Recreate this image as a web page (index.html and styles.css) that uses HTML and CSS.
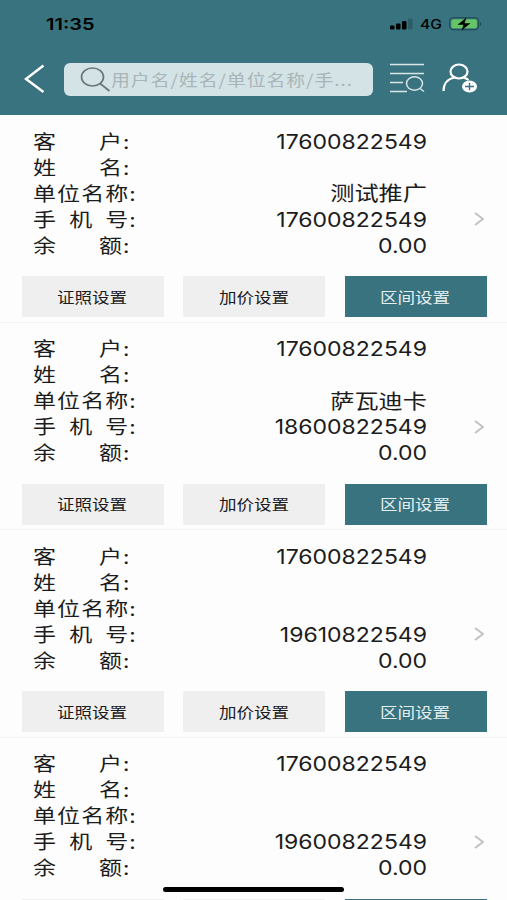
FILE: index.html
```html
<!DOCTYPE html>
<html lang="zh-CN">
<head>
  <meta charset="UTF-8">
  <meta name="viewport" content="width=device-width, initial-scale=1.0">
  <title>客户列表</title>
  <link rel="stylesheet" href="styles.css">
</head>
<body>

  <header class="header">
    <div class="status-bar">
      <span class="time">11:35</span>
      <div class="status-icons">
        <svg class="signal" width="23" height="12" viewBox="0 0 23 12">
          <rect x="0" y="7.5" width="4.5" height="4" rx="1"/>
          <rect x="6" y="5.5" width="4.5" height="6" rx="1"/>
          <rect x="12" y="3" width="4.5" height="8.5" rx="1"/>
          <rect x="18" y="0.5" width="4.5" height="11" rx="1" opacity="0.2"/>
        </svg>
        <span class="network">4G</span>
        <svg class="battery" width="33" height="14" viewBox="0 0 33 14">
          <rect x="0.6" y="0.8" width="29" height="12" rx="3.5" fill="none" stroke="#1d454d" stroke-width="1"/>
          <rect x="2.3" y="2.3" width="25.6" height="9" rx="2" fill="#65c466"/>
          <path d="M31 5v4c1.6-.6 1.6-3.4 0-4z" fill="#1d454d"/>
          <path d="M17.5.5 8.500 7.700h6l-2 5.800 9-7.200h-6z" fill="#000"/>
        </svg>
      </div>
    </div>

    <div class="nav-bar">
      <svg class="back" width="21" height="30" viewBox="0 0 21 30">
        <path d="M19.500 1.500 2 15l17.500 13"/>
      </svg>
      <div class="search-box">
        <svg class="search-icon" width="31" height="26" viewBox="0 0 31 26">
          <ellipse cx="12.500" cy="11" rx="11" ry="9"/>
          <path d="M20 17.500 29.500 25"/>
        </svg>
        <span class="placeholder">用户名/姓名/单位名称/手...</span>
      </div>
      <svg class="filter" width="36" height="30" viewBox="0 0 36 30">
        <path d="M1 1.500h34M1 10.500h34M1 19.500h13M1 28.500h17"/>
        <ellipse cx="25.500" cy="20.500" rx="8" ry="6.700"/>
        <path d="m31 25.500 4 3"/>
      </svg>
      <svg class="add-user" width="36" height="30" viewBox="0 0 36 30">
        <ellipse cx="17" cy="8.500" rx="8.500" ry="7"/>
        <path d="M1.500 28C1.500 20.500 6 15.800 12.500 14.500M21.500 14.500c2 .5 3.500 1.300 5 2.500"/>
        <ellipse class="badge" cx="27.500" cy="23.500" rx="7.500" ry="6"/>
        <path class="plus" d="M23 23.500h9M27.500 19.700v7.600"/>
      </svg>
    </div>
  </header>

  <main class="list">
    <section class="card">
      <div class="info">
        <div class="row"><span class="label two">客 户:</span><span class="value">17600822549</span></div>
        <div class="row"><span class="label two">姓 名:</span><span class="value"></span></div>
        <div class="row"><span class="label">单位名称:</span><span class="value cn">测试推广</span></div>
        <div class="row"><span class="label three">手 机 号:</span><span class="value">17600822549</span>
          <svg class="arrow" width="10" height="14" viewBox="0 0 10 14"><path d="m1 1 8 6-8 6"/></svg>
        </div>
        <div class="row"><span class="label two">余 额:</span><span class="value">0.00</span></div>
      </div>
      <div class="actions">
        <button class="btn"><span>证照设置</span></button>
        <button class="btn"><span>加价设置</span></button>
        <button class="btn primary"><span>区间设置</span></button>
      </div>
    </section>

    <section class="card">
      <div class="info">
        <div class="row"><span class="label two">客 户:</span><span class="value">17600822549</span></div>
        <div class="row"><span class="label two">姓 名:</span><span class="value"></span></div>
        <div class="row"><span class="label">单位名称:</span><span class="value cn">萨瓦迪卡</span></div>
        <div class="row"><span class="label three">手 机 号:</span><span class="value">18600822549</span>
          <svg class="arrow" width="10" height="14" viewBox="0 0 10 14"><path d="m1 1 8 6-8 6"/></svg>
        </div>
        <div class="row"><span class="label two">余 额:</span><span class="value">0.00</span></div>
      </div>
      <div class="actions">
        <button class="btn"><span>证照设置</span></button>
        <button class="btn"><span>加价设置</span></button>
        <button class="btn primary"><span>区间设置</span></button>
      </div>
    </section>

    <section class="card">
      <div class="info">
        <div class="row"><span class="label two">客 户:</span><span class="value">17600822549</span></div>
        <div class="row"><span class="label two">姓 名:</span><span class="value"></span></div>
        <div class="row"><span class="label">单位名称:</span><span class="value"></span></div>
        <div class="row"><span class="label three">手 机 号:</span><span class="value">19610822549</span>
          <svg class="arrow" width="10" height="14" viewBox="0 0 10 14"><path d="m1 1 8 6-8 6"/></svg>
        </div>
        <div class="row"><span class="label two">余 额:</span><span class="value">0.00</span></div>
      </div>
      <div class="actions">
        <button class="btn"><span>证照设置</span></button>
        <button class="btn"><span>加价设置</span></button>
        <button class="btn primary"><span>区间设置</span></button>
      </div>
    </section>

    <section class="card">
      <div class="info">
        <div class="row"><span class="label two">客 户:</span><span class="value">17600822549</span></div>
        <div class="row"><span class="label two">姓 名:</span><span class="value"></span></div>
        <div class="row"><span class="label">单位名称:</span><span class="value"></span></div>
        <div class="row"><span class="label three">手 机 号:</span><span class="value">19600822549</span>
          <svg class="arrow" width="10" height="14" viewBox="0 0 10 14"><path d="m1 1 8 6-8 6"/></svg>
        </div>
        <div class="row"><span class="label two">余 额:</span><span class="value">0.00</span></div>
      </div>
      <div class="actions">
        <button class="btn"></button>
        <button class="btn"></button>
        <button class="btn primary"></button>
      </div>
    </section>
  </main>

  <div class="home-indicator"></div>

</body>
</html>
```
FILE: styles.css
```css
* {
  box-sizing: border-box;
}
body {
  margin: 0;
  height: 900px;
  overflow: hidden;
  background: #fdfdfd;
  color: #1c1c1c;
  font-family: Inter, "Noto Sans CJK SC", sans-serif;
}
.header {
  height: 115px;
  background: #38737f;
}
.status-bar {
  display: flex;
  justify-content: space-between;
  align-items: center;
  height: 47px;
  padding: 0 25px 0 46px;
  color: #000;
}
.time {
  font-size: 16px;
  font-weight: 600;
  transform: scaleX(1.25);
  transform-origin: left;
}
.status-icons {
  display: flex;
  align-items: center;
}
.network {
  margin: 1px 7px 0 7px;
  width: 22px;
  font-size: 13px;
  font-weight: 500;
  transform: scaleX(1.2);
  transform-origin: left;
}
.nav-bar {
  display: flex;
  align-items: center;
  height: 64px;
  padding-left: 24px;
}
.back {
  fill: none;
  stroke: #fff;
  stroke-width: 2.4;
}
.search-box {
  display: flex;
  align-items: center;
  width: 309px;
  height: 33px;
  margin: 0 16px 0 19px;
  padding-left: 16px;
  border-radius: 6px;
  background: #d3e3e6;
}
.search-icon {
  fill: none;
  stroke: #6d7576;
  stroke-width: 1.7;
}
.placeholder {
  font-family: "Noto Sans CJK SC", sans-serif;
  font-size: 16px;
  letter-spacing: 0.8px;
  line-height: 24px;
  margin-bottom: 1px;
  color: #a9b5b7;
  white-space: nowrap;
  transform: scaleX(1.18);
  transform-origin: left;
}
.filter {
  margin: 0 17px 2px 0;
  fill: none;
  stroke: #d9e6e8;
  stroke-width: 1.5;
}
.add-user {
  margin-bottom: 2px;
  fill: none;
  stroke: #fff;
  stroke-width: 2.2;
}
.badge {
  fill: #fff;
  stroke: none;
}
.plus {
  stroke: #38737f;
  stroke-width: 1.4;
}

/* Customer cards */
.card {
  height: 207.6px;
  padding-top: 13px;
  border-bottom: 1px solid #f3f3f3;
}
.info {
  padding: 0 23px 0 33px;
}
.row {
  display: flex;
  align-items: center;
  height: 26px;
  line-height: 26px;
  font-size: 20px;
  white-space: nowrap;
}
/* Glyphs are wider than they are tall */
.label {
  width: 100px;
  margin-bottom: 1px;
  font-family: "Noto Sans CJK SC", sans-serif;
  font-size: 19px;
  letter-spacing: 0.9px;
  transform: scaleX(1.21);
  transform-origin: left;
}
.two {
  word-spacing: 29.5px;
}
.three {
  word-spacing: 4.8px;
}
.value {
  width: 294px;
  margin-top: 1px;
  text-align: right;
  transform: scaleX(1.15);
  transform-origin: right;
}
.value.cn {
  margin-top: 2px;
  font-size: 20px;
  transform: scaleX(1.21);
}
.arrow {
  margin-left: 47px;
  fill: none;
  stroke: #c2c2c2;
  stroke-width: 2;
}
.actions {
  display: flex;
  gap: 19.5px;
  padding: 18px 20px 0 21.5px;
}
.btn {
  flex: 1;
  height: 41px;
  padding: 0 1px 1px 0;
  border: none;
  background: #efefef;
  color: #1c1c1c;
  font-family: "Noto Sans CJK SC", sans-serif;
  font-size: 15px;
}
.btn span {
  display: inline-block;
  transform: scaleX(1.17);
}
.primary {
  background: #38737f;
  color: #e4eeef;
}
.home-indicator {
  position: fixed;
  left: 163px;
  bottom: 8px;
  width: 181px;
  height: 5px;
  border-radius: 3px;
  background: #000;
}
```
